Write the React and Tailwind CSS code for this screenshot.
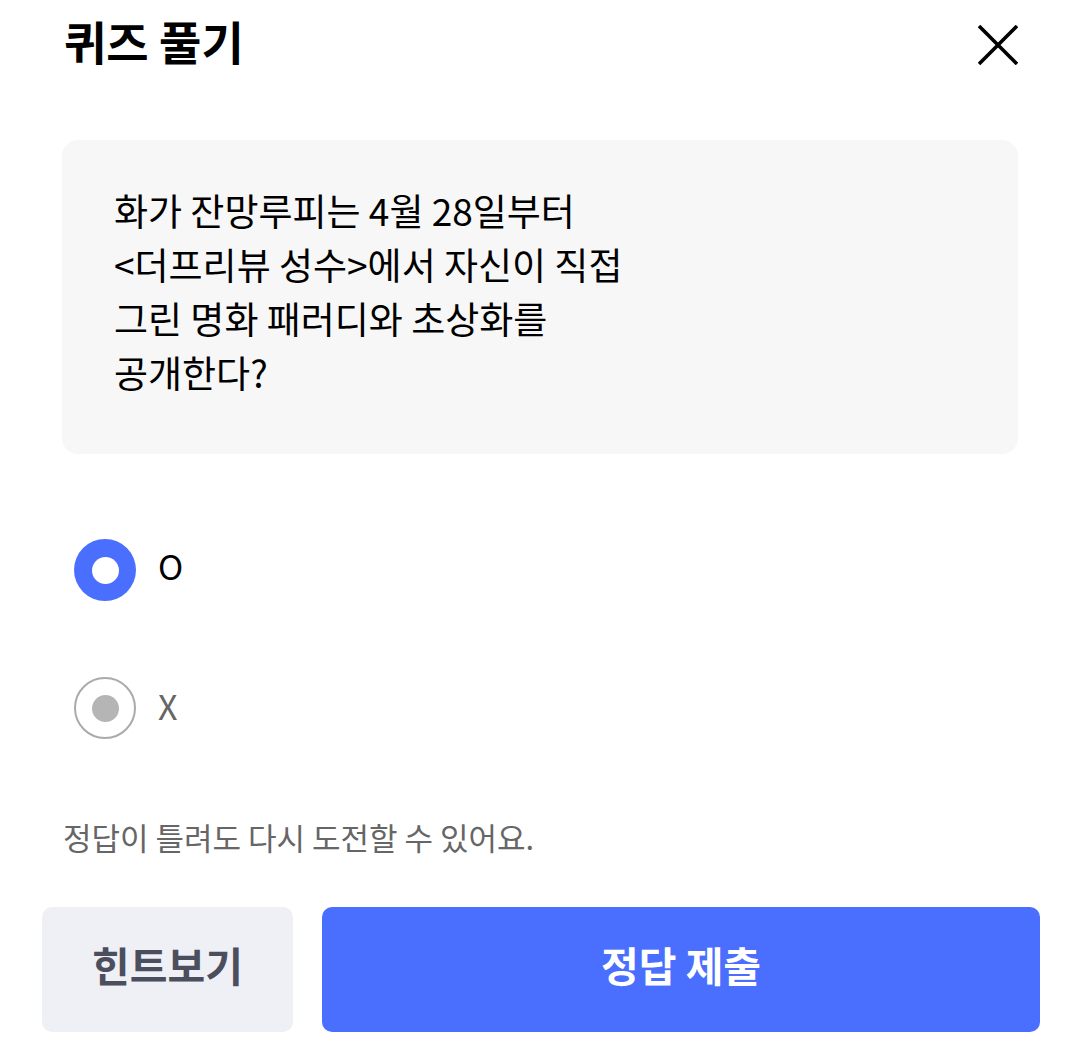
export default function App() {
  const font = { fontFamily: '"Noto Sans CJK KR", "Noto Sans", sans-serif' };
  return (
    <div className="w-[1080px] h-[1044px] bg-white overflow-hidden" style={font}>
      <div className="flex items-start justify-between pl-[64px] pr-[62px] pt-[10px]">
        <h1 className="text-[46px] leading-[60px] font-bold text-black">퀴즈 풀기</h1>
        <svg width="40" height="40" viewBox="0 0 40 40" className="mt-[15px]">
          <path d="M1 1 L39 39 M39 1 L1 39" stroke="#000" strokeWidth="3.6" fill="none" />
        </svg>
      </div>

      <div className="mx-[62px] mt-[70px] h-[314px] rounded-[16px] bg-[#f7f7f7] pl-[52px] pt-[43px]">
        <p className="text-[37px] leading-[54px] font-normal text-black">
          화가 잔망루피는 4월 28일부터
          <br />
          &lt;더프리뷰 성수&gt;에서 자신이 직접
          <br />
          그린 명화 패러디와 초상화를
          <br />
          공개한다?
        </p>
      </div>

      <div className="pl-[74px] mt-[85px] flex flex-col gap-[76px]">
        <div className="flex items-center gap-[22px]">
          <div className="w-[62px] h-[62px] rounded-full bg-[#4a6efe] flex items-center justify-center">
            <div className="w-[27px] h-[27px] rounded-full bg-white" />
          </div>
          <span className="text-[34px] leading-none text-black -mt-[8px]">O</span>
        </div>
        <div className="flex items-center gap-[22px]">
          <div className="w-[62px] h-[62px] rounded-full border-2 border-[#aaaaaa] flex items-center justify-center">
            <div className="w-[27px] h-[27px] rounded-full bg-[#b5b5b5]" />
          </div>
          <span className="text-[34px] leading-none text-[#666666] -mt-[4px]">X</span>
        </div>
      </div>

      <p className="pl-[63px] mt-[78px] text-[31px] leading-[40px] text-[#666666]">
        정답이 틀려도 다시 도전할 수 있어요.
      </p>

      <div className="flex gap-[29px] pl-[42px] pr-[40px] mt-[50px]">
        <button className="w-[251px] h-[125px] rounded-[10px] bg-[#eff0f5] pb-[10px] text-[41px] font-bold text-[#4b4e5c]">
          힌트보기
        </button>
        <button className="flex-1 h-[125px] rounded-[10px] bg-[#4a6efe] pb-[10px] text-[41px] font-bold text-white">
          정답 제출
        </button>
      </div>
    </div>
  );
}
